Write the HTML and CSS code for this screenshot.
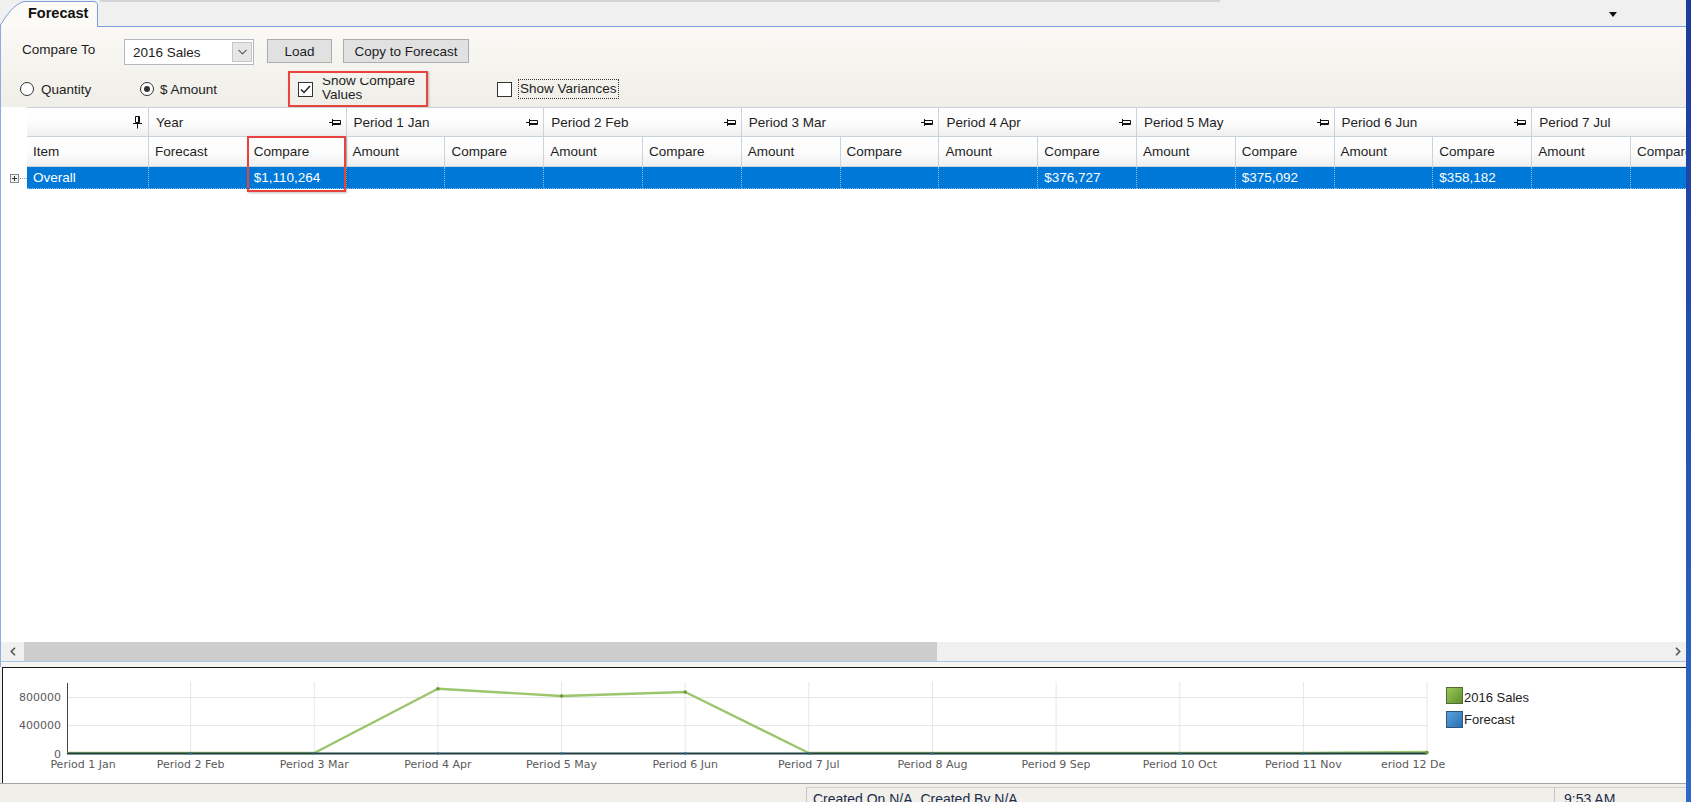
FILE: index.html
```html
<!DOCTYPE html>
<html>
<head>
<meta charset="utf-8">
<title>Forecast</title>
<link rel="stylesheet" href="styles.css">
</head>
<body>
<div class="app">
  <div class="main">
    <div class="tabstrip">
      <div class="tab">
        <svg class="tab-shape" width="98" height="27" viewBox="0 0 98 27"><path d="M0.5 27 L0.5 25 C6 16 14 4 24 1.5 L93 1.5 Q97.5 1.5 97.5 5 L97.5 27" fill="#fbfaf6" stroke="#7c9edb"/></svg>
        <span class="tab-label">Forecast</span>
      </div>
      <div class="tab-topline"></div>
      <div class="tab-menu"></div>
    </div>

    <div class="pane">
      <div class="toolbar">
        <div class="tb-row row1">
          <span class="compare-lbl">Compare To</span>
          <div class="combo">
            <span class="combo-text">2016 Sales</span>
            <span class="combo-btn"><svg width="9" height="6" viewBox="0 0 9 6"><path d="M0.5 0.8 L4.5 4.8 L8.5 0.8" fill="none" stroke="#606060" stroke-width="1.2"/></svg></span>
          </div>
          <button class="btn btn-load">Load</button>
          <button class="btn btn-copy">Copy to Forecast</button>
        </div>
        <div class="tb-row row2">
          <label class="radio r-qty"><span class="radio-dot"></span>Quantity</label>
          <label class="radio r-amt"><span class="radio-dot checked"></span>$ Amount</label>
          <div class="highlight-box">
            <span class="check"><svg width="13" height="13" viewBox="0 0 13 13"><path d="M2 6.5 L5 9.5 L11 3" fill="none" stroke="#222" stroke-width="1.5"/></svg></span>
            <span class="two"><span class="two-inner">Show Compare<br>Values</span></span>
          </div>
          <div class="var">
            <span class="check"></span>
            <span class="focus-lbl">Show Variances</span>
          </div>
        </div>
      </div>

      <div class="grid">
        <div class="gtable">
          <div class="gut gut-h"></div>
          <div class="band band-item"><svg class="vpin" width="9" height="13" viewBox="0 0 9 13"><path d="M2.5 0.5h4v6h-4z M5.5 0.5v6 M0 7.5h9 M4.5 7.5v5" fill="none" stroke="#111"/></svg></div>
          <div class="band span2"><span>Year</span><svg class="hpin" width="13" height="9" viewBox="0 0 13 9"><path d="M0 4.5h3.5 M3.5 1v7 M3.5 2.5h8v4h-8 M3.5 5.5h8" fill="none" stroke="#111"/></svg></div>
          <div class="band span2"><span>Period 1 Jan</span><svg class="hpin" width="13" height="9" viewBox="0 0 13 9"><path d="M0 4.5h3.5 M3.5 1v7 M3.5 2.5h8v4h-8 M3.5 5.5h8" fill="none" stroke="#111"/></svg></div>
          <div class="band span2"><span>Period 2 Feb</span><svg class="hpin" width="13" height="9" viewBox="0 0 13 9"><path d="M0 4.5h3.5 M3.5 1v7 M3.5 2.5h8v4h-8 M3.5 5.5h8" fill="none" stroke="#111"/></svg></div>
          <div class="band span2"><span>Period 3 Mar</span><svg class="hpin" width="13" height="9" viewBox="0 0 13 9"><path d="M0 4.5h3.5 M3.5 1v7 M3.5 2.5h8v4h-8 M3.5 5.5h8" fill="none" stroke="#111"/></svg></div>
          <div class="band span2"><span>Period 4 Apr</span><svg class="hpin" width="13" height="9" viewBox="0 0 13 9"><path d="M0 4.5h3.5 M3.5 1v7 M3.5 2.5h8v4h-8 M3.5 5.5h8" fill="none" stroke="#111"/></svg></div>
          <div class="band span2"><span>Period 5 May</span><svg class="hpin" width="13" height="9" viewBox="0 0 13 9"><path d="M0 4.5h3.5 M3.5 1v7 M3.5 2.5h8v4h-8 M3.5 5.5h8" fill="none" stroke="#111"/></svg></div>
          <div class="band span2"><span>Period 6 Jun</span><svg class="hpin" width="13" height="9" viewBox="0 0 13 9"><path d="M0 4.5h3.5 M3.5 1v7 M3.5 2.5h8v4h-8 M3.5 5.5h8" fill="none" stroke="#111"/></svg></div>
          <div class="band span2"><span>Period 7 Jul</span><svg class="hpin" width="13" height="9" viewBox="0 0 13 9"><path d="M0 4.5h3.5 M3.5 1v7 M3.5 2.5h8v4h-8 M3.5 5.5h8" fill="none" stroke="#111"/></svg></div>

          <div class="hcell">Item</div>
          <div class="hcell">Forecast</div>
          <div class="hcell">Compare</div>
          <div class="hcell">Amount</div><div class="hcell">Compare</div>
          <div class="hcell">Amount</div><div class="hcell">Compare</div>
          <div class="hcell">Amount</div><div class="hcell">Compare</div>
          <div class="hcell">Amount</div><div class="hcell">Compare</div>
          <div class="hcell">Amount</div><div class="hcell">Compare</div>
          <div class="hcell">Amount</div><div class="hcell">Compare</div>
          <div class="hcell">Amount</div><div class="hcell">Compare</div>

          <div class="gut gut-row"><span class="expander"><svg width="9" height="9" viewBox="0 0 9 9"><rect x="0.5" y="0.5" width="8" height="8" fill="#f4f4f4" stroke="#8a8a8a"/><path d="M2 4.5h5 M4.5 2v5" stroke="#333"/></svg></span><span class="tree-line"></span></div>
          <div class="dcell">Overall</div>
          <div class="dcell"></div>
          <div class="dcell">$1,110,264</div>
          <div class="dcell"></div><div class="dcell"></div>
          <div class="dcell"></div><div class="dcell"></div>
          <div class="dcell"></div><div class="dcell"></div>
          <div class="dcell"></div><div class="dcell">$376,727</div>
          <div class="dcell"></div><div class="dcell">$375,092</div>
          <div class="dcell"></div><div class="dcell">$358,182</div>
          <div class="dcell"></div><div class="dcell"></div>
        </div>
        <div class="callout"></div>
      </div>

      <div class="hscroll">
        <span class="sb-arrow sb-left"><svg width="6" height="9" viewBox="0 0 6 9"><path d="M5 0.8 L1.3 4.5 L5 8.2" fill="none" stroke="#555" stroke-width="1.6"/></svg></span>
        <span class="sb-thumb"></span>
        <span class="sb-track"></span>
        <span class="sb-arrow sb-right"><svg width="6" height="9" viewBox="0 0 6 9"><path d="M1 0.8 L4.7 4.5 L1 8.2" fill="none" stroke="#555" stroke-width="1.6"/></svg></span>
      </div>
      <div class="splitter"></div>
    </div>

    <div class="chart">
      <svg class="chart-svg" width="1683" height="115" viewBox="0 0 1683 115">
        <g transform="translate(-3,-668)">
          <g stroke="#e6e6e6" stroke-width="1">
            <path d="M67 697.5H1427 M67 725.5H1427"/>
            <path d="M190.6 682V753 M314.3 682V753 M437.9 682V753 M561.6 682V753 M685.2 682V753 M808.8 682V753 M932.5 682V753 M1056.1 682V753 M1179.8 682V753 M1303.4 682V753 M1427 682V753"/>
          </g>
          <path d="M67.5 683V754" stroke="#444" stroke-width="1"/>
          <g font-family="DejaVu Sans, sans-serif" font-size="11" fill="#5a5a5a" text-anchor="end">
            <text x="61" y="701">800000</text>
            <text x="61" y="729">400000</text>
            <text x="61" y="758">0</text>
          </g>
          <polyline points="67,753 190.6,753 314.3,753 437.9,688.7 561.6,696 685.2,692 808.8,753 932.5,753 1056.1,753 1179.8,753 1303.4,753 1427,752" fill="none" stroke="#9cc56c" stroke-width="2.4" stroke-linejoin="round"/>
          <path d="M67 753.5H1427" stroke="#1f3f45" stroke-width="2"/>
          <g fill="#6d9c3c">
            <circle cx="437.9" cy="688.7" r="1.8"/>
            <circle cx="561.6" cy="696" r="1.8"/>
            <circle cx="685.2" cy="692" r="1.8"/>
            <circle cx="1427" cy="752.5" r="1.8"/>
          </g>
          <g fill="#2a6f8a">
            <circle cx="190.6" cy="753.5" r="1.3"/><circle cx="314.3" cy="753.5" r="1.3"/><circle cx="437.9" cy="753.5" r="1.3"/><circle cx="561.6" cy="753.5" r="1.3"/><circle cx="685.2" cy="753.5" r="1.3"/><circle cx="808.8" cy="753.5" r="1.3"/><circle cx="932.5" cy="753.5" r="1.3"/><circle cx="1056.1" cy="753.5" r="1.3"/><circle cx="1179.8" cy="753.5" r="1.3"/><circle cx="1303.4" cy="753.5" r="1.3"/>
          </g>
          <g font-family="DejaVu Sans, sans-serif" font-size="11" fill="#5a5a5a" text-anchor="middle">
            <text x="83" y="768">Period 1 Jan</text>
            <text x="190.6" y="768">Period 2 Feb</text>
            <text x="314.3" y="768">Period 3 Mar</text>
            <text x="437.9" y="768">Period 4 Apr</text>
            <text x="561.6" y="768">Period 5 May</text>
            <text x="685.2" y="768">Period 6 Jun</text>
            <text x="808.8" y="768">Period 7 Jul</text>
            <text x="932.5" y="768">Period 8 Aug</text>
            <text x="1056.1" y="768">Period 9 Sep</text>
            <text x="1179.8" y="768">Period 10 Oct</text>
            <text x="1303.4" y="768">Period 11 Nov</text>
            <text x="1381" y="768" text-anchor="start">eriod 12 De</text>
          </g>
          <defs>
            <linearGradient id="gGreen" x1="0" y1="0" x2="1" y2="1"><stop offset="0" stop-color="#9cc95a"/><stop offset="1" stop-color="#5e8e2c"/></linearGradient>
            <linearGradient id="gBlue" x1="0" y1="0" x2="1" y2="1"><stop offset="0" stop-color="#5aa2dc"/><stop offset="1" stop-color="#2a6fb0"/></linearGradient>
          </defs>
          <rect x="1446.5" y="687.5" width="16" height="16" fill="url(#gGreen)" stroke="#4d6b33"/>
          <rect x="1446.5" y="711.5" width="16" height="16" fill="url(#gBlue)" stroke="#2c5680"/>
          <g font-family="Liberation Sans, Arial, sans-serif" font-size="13" fill="#222">
            <text x="1464" y="701.5">2016 Sales</text>
            <text x="1464" y="724">Forecast</text>
          </g>
        </g>
      </svg>
    </div>

    <div class="statusbar">
      <div class="sb-spacer"></div>
      <div class="sb-panel sb-main">Created On N/A, Created By N/A</div>
      <div class="sb-panel sb-time">9:53 AM</div>
    </div>
  </div>
  <div class="edge"></div>
</div>
</body>
</html>
```

FILE: styles.css
```css
* { box-sizing: border-box; }
html, body { margin: 0; padding: 0; }
body {
  width: 1691px;
  height: 802px;
  overflow: hidden;
  font-family: "Liberation Sans", Arial, sans-serif;
  font-size: 13.5px;
  color: #1e1e1e;
  background: #f0f0f0;
}
.app { display: flex; width: 1691px; height: 802px; }
.main { width: 1686px; height: 802px; display: flex; flex-direction: column; overflow: hidden; }
.edge { width: 5px; background: linear-gradient(#1c3a9c, #2d68cb); }

/* tab strip */
.tabstrip {
  height: 27px;
  flex: none;
  display: flex;
  align-items: flex-end;
  background: #f0f0f0;
  border-bottom: 1px solid #7c9edb;
}
.tab {
  position: relative;
  z-index: 1;
  width: 98px;
  height: 27px;
  margin-bottom: -1px;
  flex: none;
}
.tab-shape { position: absolute; left: 0; top: 0; }
.tab-label {
  position: relative;
  display: block;
  padding-left: 28px;
  line-height: 27px;
  font-weight: bold;
  font-size: 14.5px;
  color: #111;
}
.tab-topline {
  align-self: flex-start;
  width: 1120px;
  height: 2px;
  margin-left: 2px;
  background: #d4d4d4;
  flex: none;
}
.tab-menu {
  align-self: center;
  margin-left: auto;
  margin-right: 69px;
  width: 0;
  height: 0;
  border-left: 4.5px solid transparent;
  border-right: 4.5px solid transparent;
  border-top: 5px solid #111;
  position: relative;
  top: 1px;
}

/* main pane */
.pane {
  display: flex;
  flex-direction: column;
  border-left: 1px solid #8aaee0;
  flex: none;
}
.toolbar {
  height: 80px;
  padding: 12px 0 0 19px;
  display: flex;
  flex-direction: column;
  gap: 6px;
  background: linear-gradient(#faf9f5, #efeee8);
}
.tb-row { display: flex; }
.row1 { height: 26px; align-items: flex-start; }
.compare-lbl { width: 104px; line-height: 22px; padding-left: 2px; }
.combo {
  width: 130px;
  height: 26px;
  background: #fff;
  border: 1px solid #b5b7bd;
  display: flex;
  align-items: center;
  justify-content: space-between;
  padding: 0 1px 0 8px;
}
.combo-btn {
  width: 20px;
  height: 20px;
  background: #e6e6e6;
  border: 1px solid #c6c6c6;
  display: flex;
  align-items: center;
  justify-content: center;
}
.btn {
  height: 24px;
  background: #e1e1e1;
  border: 1px solid #adadad;
  font: inherit;
  color: #1e1e1e;
  padding: 0;
  border-radius: 0;
}
.btn-load { width: 65px; margin-left: 13px; }
.btn-copy { width: 126px; margin-left: 11px; }

.row2 { height: 36px; align-items: center; }
.radio { display: flex; align-items: center; gap: 6px; }
.r-qty { width: 120px; gap: 7px; }
.r-amt { width: 148px; }
.radio-dot {
  width: 14px;
  height: 14px;
  border: 1px solid #333;
  border-radius: 50%;
  background: #fff;
  display: flex;
  align-items: center;
  justify-content: center;
}
.radio-dot.checked::after {
  content: "";
  width: 6px;
  height: 6px;
  border-radius: 50%;
  background: #333;
}
.highlight-box {
  width: 140px;
  height: 36px;
  border: 2px solid #e8433d;
  box-shadow: 1px 1px 2px rgba(0,0,0,0.25);
  display: flex;
  align-items: center;
  padding-left: 8px;
  gap: 9px;
}
.check {
  width: 15px;
  height: 15px;
  border: 1px solid #333;
  background: #fff;
  display: flex;
  align-items: center;
  justify-content: center;
  flex: none;
}
.two {
  height: 23px;
  overflow: hidden;
  line-height: 14px;
  display: block;
}
.two-inner { display: block; margin-top: -4px; }
.var { margin-left: 69px; display: flex; align-items: center; gap: 6px; }
.focus-lbl {
  height: 20px;
  line-height: 18px;
  padding: 0 1px;
  border: 1px dotted #333;
  color: #1e1e1e;
}

/* grid */
.grid {
  position: relative;
  height: 535px;
  background: #fff;
  overflow: hidden;
}
.gtable {
  display: grid;
  grid-template-columns: 26px 122px repeat(16, 98.8px);
  grid-template-rows: 30px 30px 22px;
  width: max-content;
}
.gut { background: #fff; }
.gut-h { grid-row: span 2; }
.gut-row { display: flex; align-items: center; padding-left: 9px; }
.expander { display: block; width: 9px; height: 9px; }
.expander svg { display: block; }
.tree-line { flex: 1; border-top: 1px dotted #9a9a9a; margin-left: 1px; }
.band, .hcell {
  background: linear-gradient(#ffffff 0%, #fcfcfc 55%, #efefef 100%);
  border-right: 1px solid #c9d3d9;
  border-bottom: 1px solid #c9d3d9;
  white-space: nowrap;
  overflow: hidden;
}
.band {
  border-top: 1px solid #c9d3d9;
  display: flex;
  align-items: center;
  justify-content: space-between;
  padding: 0 4px 0 7px;
}
.band-item { justify-content: flex-end; padding-right: 6px; }
.span2 { grid-column: span 2; }
.hcell { display: flex; align-items: center; padding-left: 6px; }
.dcell {
  background: #0078d7;
  color: #fff;
  border-right: 1px dotted #8fc1ec;
  border-bottom: 1px dotted #8fc1ec;
  padding-left: 6px;
  line-height: 21px;
  white-space: nowrap;
  overflow: hidden;
}
.dcell:first-of-type { padding-left: 7px; }
.callout {
  position: absolute;
  left: 246px;
  top: 29px;
  width: 99px;
  height: 56px;
  border: 2px solid #e8433d;
  box-shadow: 1px 1px 2px rgba(0,0,0,0.25);
}

/* horizontal scrollbar */
.hscroll {
  height: 19px;
  display: flex;
  background: #f0f0f0;
}
.sb-arrow { width: 23px; display: flex; align-items: center; justify-content: center; }
.sb-right { width: 17px; }
.sb-thumb { width: 913px; background: #cdcdcd; }
.sb-track { flex: 1; }
.splitter {
  height: 6px;
  border-top: 1px solid #a9c4ea;
  background: #f6f5f0;
}

/* chart */
.chart {
  height: 116px;
  flex: none;
  margin-left: 2px;
  background: #fff;
  border-top: 1px solid #1a1a1a;
  border-left: 1px solid #1a1a1a;
  overflow: hidden;
}
.chart-svg { display: block; }

/* status bar */
.statusbar {
  height: 19px;
  flex: none;
  display: flex;
  background: #f0efe9;
  border-top: 1px solid #a4a4a4;
  padding-top: 3px;
}
.sb-spacer { width: 806px; }
.sb-panel {
  border-top: 1px solid #cfcfcf;
  border-left: 1px solid #c4c4c4;
  padding: 3px 0 0 6px;
  font-size: 14px;
  line-height: 16px;
  color: #1d2b4c;
  white-space: nowrap;
}
.sb-main { width: 748px; }
.sb-time { flex: 1; padding-left: 9px; }
```
